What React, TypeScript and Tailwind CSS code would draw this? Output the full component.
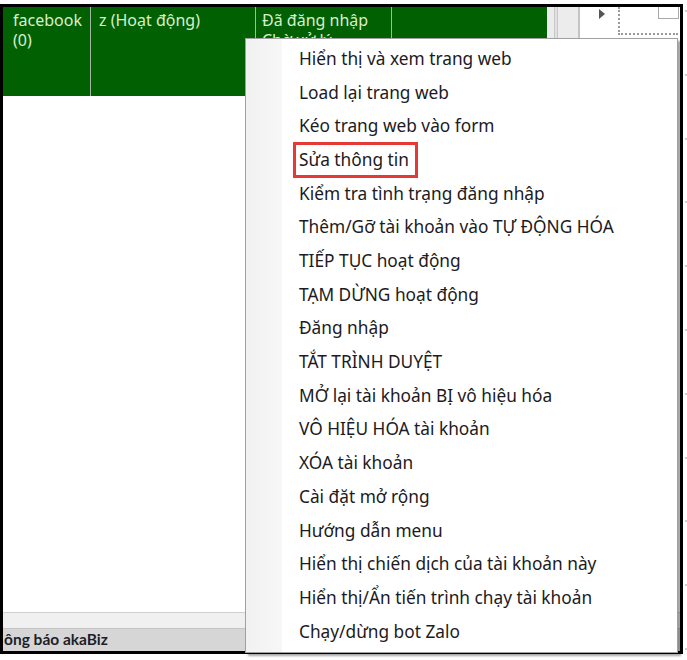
import * as React from 'react';

const items = [
  'Hiển thị và xem trang web',
  'Load lại trang web',
  'Kéo trang web vào form',
  'Sửa thông tin',
  'Kiểm tra tình trạng đăng nhập',
  'Thêm/Gỡ tài khoản vào TỰ ĐỘNG HÓA',
  'TIẾP TỤC hoạt động',
  'TẠM DỪNG hoạt động',
  'Đăng nhập',
  'TẮT TRÌNH DUYỆT',
  'MỞ lại tài khoản BỊ vô hiệu hóa',
  'VÔ HIỆU HÓA tài khoản',
  'XÓA tài khoản',
  'Cài đặt mở rộng',
  'Hướng dẫn menu',
  'Hiển thị chiến dịch của tài khoản này',
  'Hiển thị/Ẩn tiến trình chạy tài khoản',
  'Chạy/dừng bot Zalo',
];

export default function App() {
  return (
    <div
      className="relative h-[660px] w-[687px] overflow-hidden bg-white pt-[4px]"
      style={{ fontFamily: '"Noto Sans", "Open Sans", sans-serif' }}
    >
      {/* window frame */}
      <div className="flex h-[650px] w-[683px] flex-col border-[3px] border-black bg-white">
        {/* header row */}
        <div className="flex h-[89px] shrink-0">
          <div className="flex w-[544px] bg-[#016001] text-[16px] leading-[20px] text-[#d8efcc]">
            <div className="w-[88px] border-r border-[#9fb89f] pl-[10px] pt-[3px]">
              facebook
              <br />
              (0)
            </div>
            <div className="w-[165px] border-r border-[#9fb89f] px-[8px] pt-[3px]">z (Hoạt động)</div>
            <div className="w-[136px] border-r border-[#9fb89f] px-[6px] pt-[3px]">
              Đã đăng nhập
              <br />
              Chờ xử lý
            </div>
            <div className="flex-1" />
          </div>
          <div className="flex w-[33px] bg-[#ececec]">
            <div className="ml-[7px] w-[4px] border-x border-[#c8c8c8] bg-[#e0e0e0]" />
            <div className="ml-auto w-[2px] bg-[#c4c4c4]" />
          </div>
          <div className="relative flex-1 bg-white">
            <div className="absolute left-[19px] top-[2px] h-0 w-0 border-y-[5px] border-l-[6px] border-y-transparent border-l-[#555]" />
            <div className="absolute left-[38px] top-0 h-[28px] w-[60px] border-b-2 border-l-2 border-dotted border-[#9a9a9a]" />
            <div className="absolute right-[1px] top-0 h-[12px] w-[21px] border border-t-0 border-[#aaa]" />
          </div>
        </div>
        {/* body */}
        <div className="flex-1 bg-white" />
        <div className="h-[16px] shrink-0 border-t border-[#cfcfcf] bg-[#f0f0f0]" />
        <div
          className="h-[23px] shrink-0 border-t border-[#c4c4c4] bg-[#d6d6d6] pl-[1px] text-[15.5px] font-bold leading-[21px] text-[#1e1e2a]"
          style={{ fontFamily: 'Lato, "Noto Sans", sans-serif' }}
        >
          ông báo akaBiz
        </div>
      </div>

      {/* faint dots outside the frame on the right */}
      <div className="absolute right-0 top-[10px] flex h-[640px] w-[2px] flex-col justify-between">
        {Array.from({ length: 11 }).map((_, i) => (
          <div key={i} className="h-[2px] w-[2px] bg-[#c8d0dc]" />
        ))}
      </div>

      {/* context menu */}
      <div className="absolute left-[245px] top-[38px] flex h-[615px] w-[433px] border border-[#a0a0a0] bg-white shadow-[3px_3px_2px_rgba(0,0,0,0.35)]">
        <div className="w-[36px] shrink-0 bg-gradient-to-r from-[#f1f1f1] to-[#f7f7f7]" />
        <div className="flex flex-1 flex-col pt-[3px]">
          {items.map((t) => (
            <div key={t} className="flex h-[33.7px] items-center pl-[17px] text-[17.3px] text-[#1c1a22]">
              {t === 'Sửa thông tin' ? (
                <span className="-ml-[6px] border-[3px] border-[#e53935] py-[2px] pl-[3px] pr-[6px]">{t}</span>
              ) : (
                t
              )}
            </div>
          ))}
        </div>
      </div>
    </div>
  );
}
